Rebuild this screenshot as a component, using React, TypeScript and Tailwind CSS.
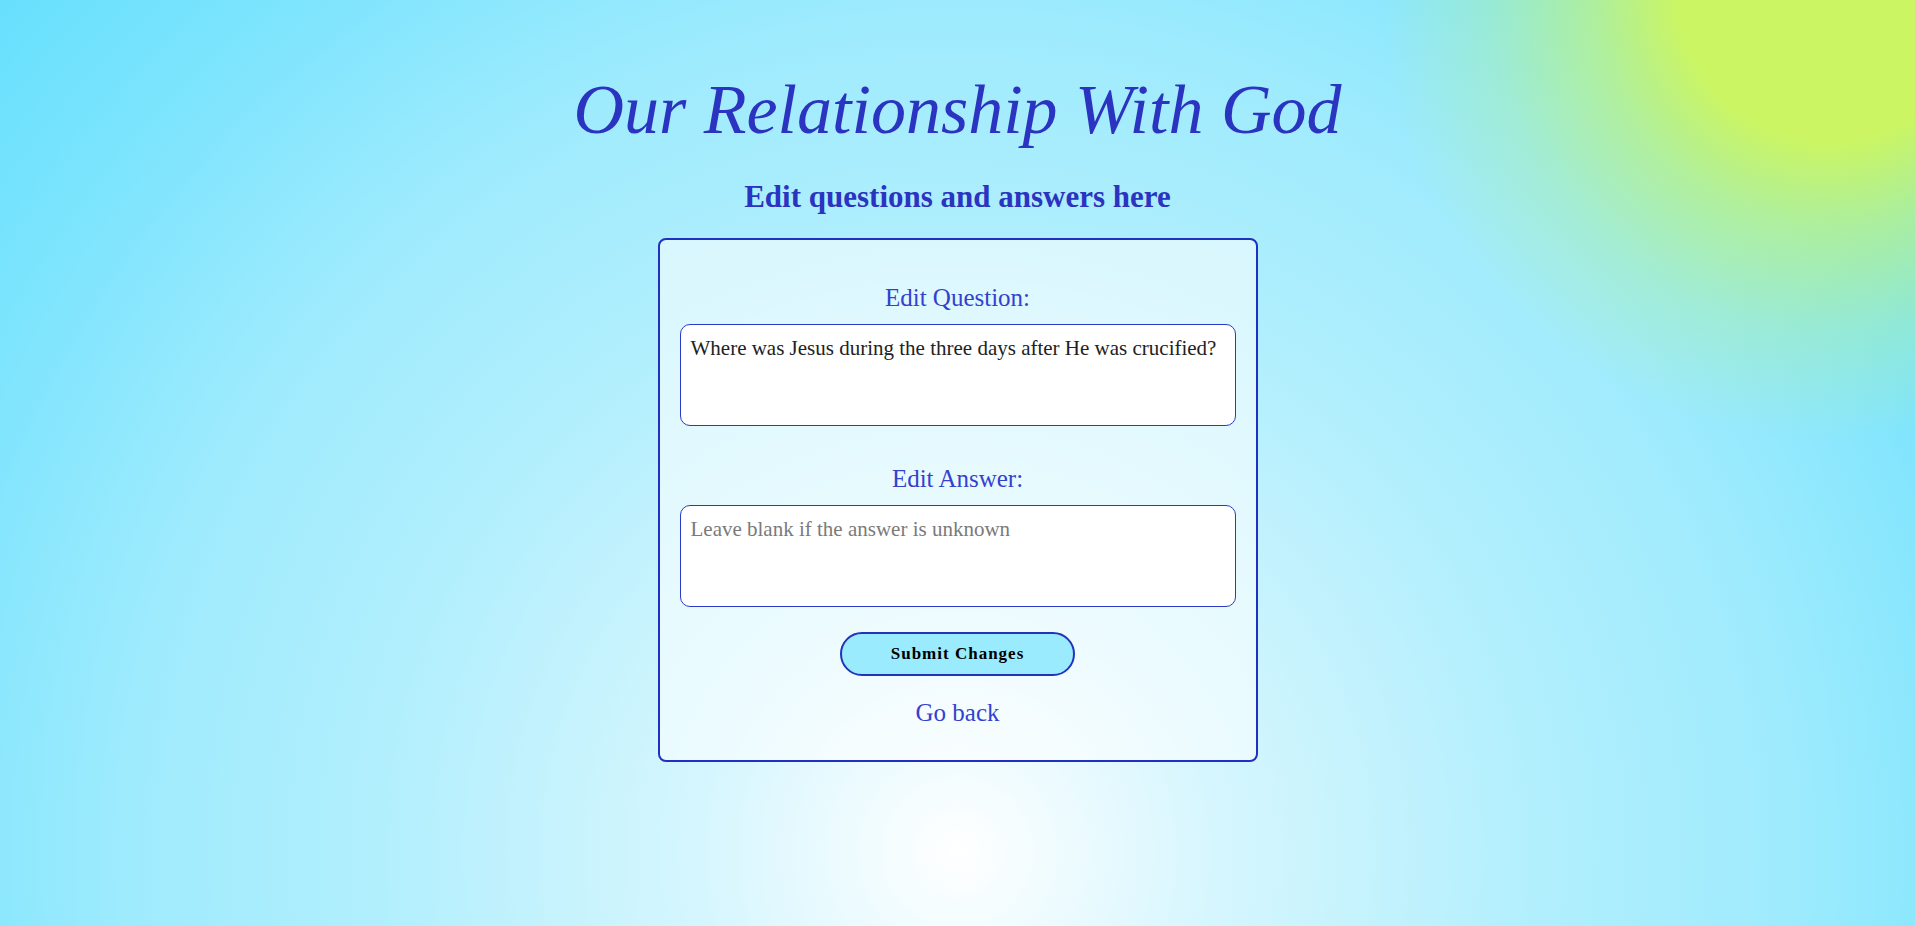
import { useState } from 'react';

export default function App() {
  const [question, setQuestion] = useState(
    'Where was Jesus during the three days after He was crucified?'
  );
  const [answer, setAnswer] = useState('');

  return (
    <div className="min-h-screen w-full font-['Liberation_Serif',serif] bg-[radial-gradient(circle_at_1830px_-10px,#cbf562_0px,#cbf562_150px,rgba(203,245,98,0.6)_240px,rgba(203,245,98,0.25)_340px,rgba(203,245,98,0)_450px),radial-gradient(circle_farthest-corner_at_50%_92%,#ffffff_0%,#d6f6fe_20%,#b2effd_45%,#9eebfd_65%,#80e5fd_82%,#67e0fd_100%)]">
      <div className="flex flex-col items-center pt-[75px] pb-16">
        {/* Page heading */}
        <h1 className="text-[70px] leading-none italic text-[#2b34c0]">
          Our Relationship With God
        </h1>
        <h2 className="mt-9 text-[31px] leading-none font-semibold text-[#2b34c0]">
          Edit questions and answers here
        </h2>

        {/* Edit form */}
        <form
          className="mt-[26px] w-[600px] rounded-lg border-2 border-[#2030c0] bg-white/55 px-5 pt-[45px] pb-[35px] flex flex-col items-center"
          onSubmit={(e) => e.preventDefault()}
        >
          <label className="text-[25px] leading-none text-[#3441cf]">
            Edit Question:
          </label>
          <textarea
            value={question}
            onChange={(e) => setQuestion(e.target.value)}
            className="mt-[14px] h-[102px] w-full resize-none rounded-[10px] border border-[#2a3ac8] bg-white px-[10px] pt-[8px] text-[21px] text-[#222] outline-none"
          />

          <label className="mt-10 text-[25px] leading-none text-[#3441cf]">
            Edit Answer:
          </label>
          <textarea
            value={answer}
            onChange={(e) => setAnswer(e.target.value)}
            placeholder="Leave blank if the answer is unknown"
            className="mt-[14px] h-[102px] w-full resize-none rounded-[10px] border border-[#2a3ac8] bg-white px-[10px] pt-[8px] text-[21px] text-[#222] placeholder:text-[#7a7a7a] outline-none"
          />

          <button
            type="submit"
            className="mt-[25px] h-[44px] w-[235px] rounded-full border-2 border-[#2233bb] bg-[#99ebfd] text-[17px] font-bold tracking-[1px] text-black"
          >
            Submit Changes
          </button>

          <a href="#" className="mt-6 text-[25px] leading-none text-[#3441cf]">
            Go back
          </a>
        </form>
      </div>
    </div>
  );
}
